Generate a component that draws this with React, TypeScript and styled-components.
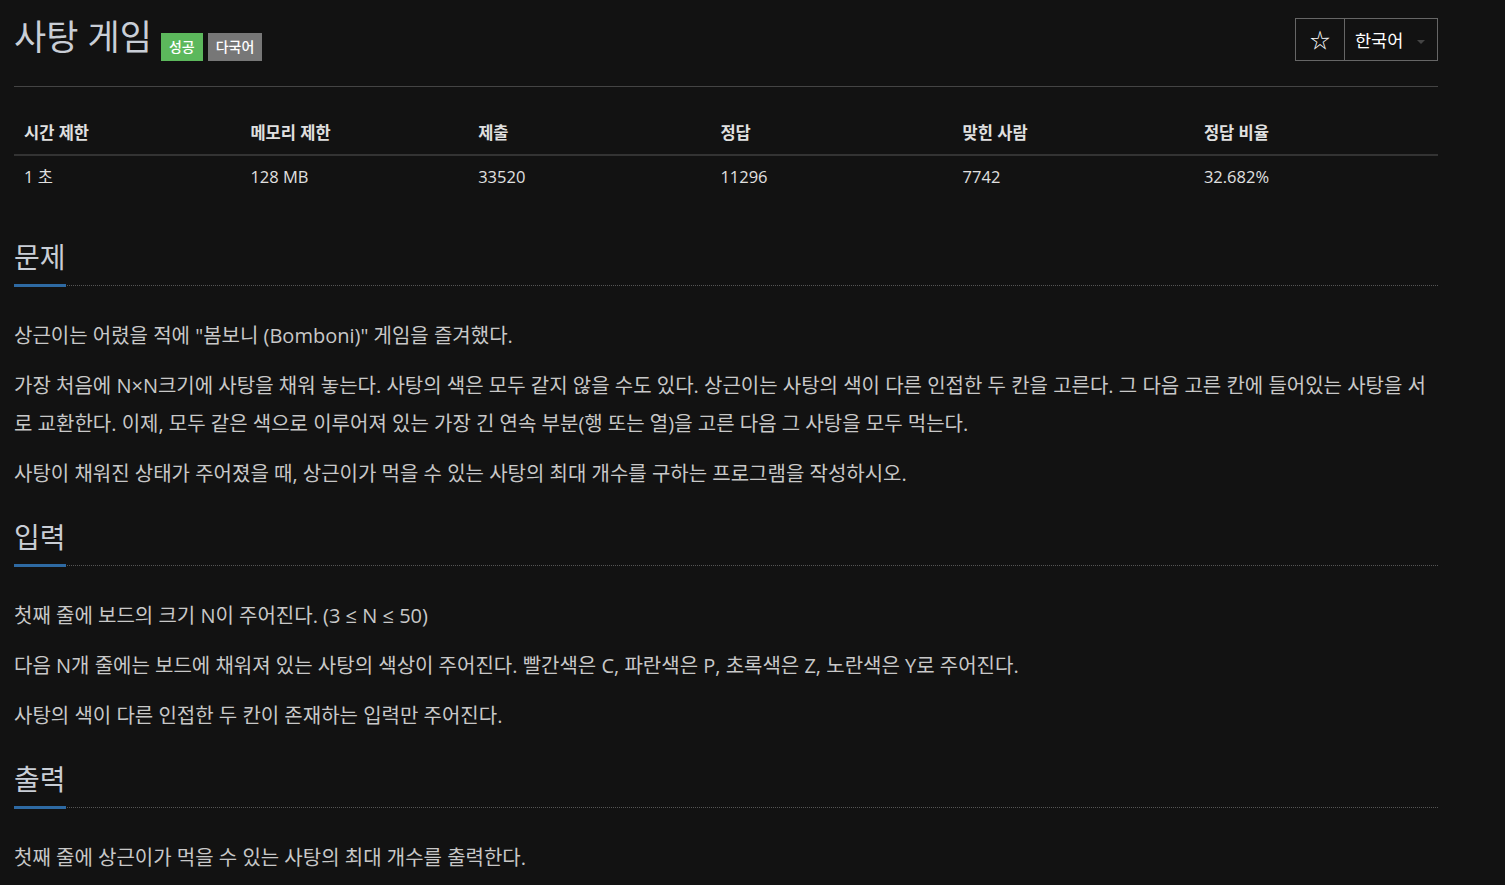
import React from "react";
import styled, { createGlobalStyle } from "styled-components";

const Global = createGlobalStyle`
  html, body {
    margin: 0;
    padding: 0;
    background: #121212;
  }
  body {
    font-family: "Open Sans", "Noto Sans CJK KR", sans-serif;
    color: #cccccc;
  }
`;

const Page = styled.div`
  width: 1424px;
  padding: 0 14px;
`;

const PageHeader = styled.div`
  display: flex;
  align-items: flex-start;
  justify-content: space-between;
  border-bottom: 1px solid #444;
  padding: 14px 0 25px 0;
`;

const TitleRow = styled.div`
  display: flex;
  align-items: flex-end;
  gap: 5px;
`;

const Title = styled.h1`
  margin: 0 4px 0 0;
  font-size: 35px;
  font-weight: 400;
  line-height: 46px;
  color: #c9ced6;
`;

const Label = styled.span<{ $bg: string }>`
  display: inline-block;
  background: ${(p) => p.$bg};
  color: #fff;
  font-size: 14px;
  font-weight: 500;
  line-height: 28px;
  height: 28px;
  padding: 0 8px;
  margin-bottom: -1px;
`;

const BtnGroup = styled.div`
  display: flex;
  border: 1px solid #666;
  height: 41px;
  margin-top: 4px;
`;

const StarBtn = styled.div`
  width: 48px;
  display: flex;
  align-items: center;
  justify-content: center;
  border-right: 1px solid #666;
  color: #fff;
  font-size: 20px;
`;

const LangBtn = styled.div`
  width: 92px;
  display: flex;
  align-items: center;
  padding-left: 10px;
  box-sizing: border-box;
  color: #fff;
  font-size: 17.5px;
  gap: 14px;
`;

const Caret = styled.span`
  width: 0;
  height: 0;
  border-left: 4px solid transparent;
  border-right: 4px solid transparent;
  border-top: 4px solid #444;
  margin-top: 4px;
`;

const Table = styled.table`
  width: 100%;
  border-collapse: collapse;
  margin: 25px 0 37px 0;
  font-size: 16.5px;
  color: #e0e0e0;
`;

const Th = styled.th<{ $w: number }>`
  width: ${(p) => p.$w}px;
  text-align: left;
  font-weight: 700;
  padding: 10px 10px;
  line-height: 22px;
  border-bottom: 2px solid #333;
`;

const Td = styled.td`
  padding: 7px 10px 9px 10px;
  line-height: 28px;
`;

const Section = styled.section`
  margin-top: 24px;
`;

const Headline = styled.div`
  border-bottom: 1px dotted #555;
`;

const H2 = styled.h2`
  display: inline-block;
  margin: 0 0 -2px 0;
  font-size: 28px;
  font-weight: 400;
  line-height: 40px;
  padding-bottom: 7px;
  color: #c9ced6;
  border-bottom: 3px solid #2e6aa3;
`;

const Body = styled.div`
  padding-top: 31px;
`;

const P = styled.p`
  margin: 0 0 12px 0;
  font-size: 20px;
  line-height: 38px;
  color: #c8c8c8;
`;

const cols = [
  { h: "시간 제한", v: "1 초", w: 228 },
  { h: "메모리 제한", v: "128 MB", w: 228 },
  { h: "제출", v: "33520", w: 242 },
  { h: "정답", v: "11296", w: 242 },
  { h: "맞힌 사람", v: "7742", w: 242 },
  { h: "정답 비율", v: "32.682%", w: 242 },
];

const sections = [
  {
    title: "문제",
    paras: [
      '상근이는 어렸을 적에 "봄보니 (Bomboni)" 게임을 즐겨했다.',
      "가장 처음에 N×N크기에 사탕을 채워 놓는다. 사탕의 색은 모두 같지 않을 수도 있다. 상근이는 사탕의 색이 다른 인접한 두 칸을 고른다. 그 다음 고른 칸에 들어있는 사탕을 서로 교환한다. 이제, 모두 같은 색으로 이루어져 있는 가장 긴 연속 부분(행 또는 열)을 고른 다음 그 사탕을 모두 먹는다.",
      "사탕이 채워진 상태가 주어졌을 때, 상근이가 먹을 수 있는 사탕의 최대 개수를 구하는 프로그램을 작성하시오.",
    ],
  },
  {
    title: "입력",
    paras: [
      "첫째 줄에 보드의 크기 N이 주어진다. (3 ≤ N ≤ 50)",
      "다음 N개 줄에는 보드에 채워져 있는 사탕의 색상이 주어진다. 빨간색은 C, 파란색은 P, 초록색은 Z, 노란색은 Y로 주어진다.",
      "사탕의 색이 다른 인접한 두 칸이 존재하는 입력만 주어진다.",
    ],
  },
  {
    title: "출력",
    paras: ["첫째 줄에 상근이가 먹을 수 있는 사탕의 최대 개수를 출력한다."],
  },
];

export default function App() {
  return (
    <>
      <Global />
      <Page>
        <PageHeader>
          <TitleRow>
            <Title>사탕 게임</Title>
            <Label $bg="#5cb85c">성공</Label>
            <Label $bg="#777777">다국어</Label>
          </TitleRow>
          <BtnGroup>
            <StarBtn>☆</StarBtn>
            <LangBtn>
              한국어
              <Caret />
            </LangBtn>
          </BtnGroup>
        </PageHeader>
        <Table>
          <thead>
            <tr>
              {cols.map((c) => (
                <Th key={c.h} $w={c.w}>
                  {c.h}
                </Th>
              ))}
            </tr>
          </thead>
          <tbody>
            <tr>
              {cols.map((c) => (
                <Td key={c.h}>{c.v}</Td>
              ))}
            </tr>
          </tbody>
        </Table>
        {sections.map((s) => (
          <Section key={s.title}>
            <Headline>
              <H2>{s.title}</H2>
            </Headline>
            <Body>
              {s.paras.map((p, i) => (
                <P key={i}>{p}</P>
              ))}
            </Body>
          </Section>
        ))}
      </Page>
    </>
  );
}
